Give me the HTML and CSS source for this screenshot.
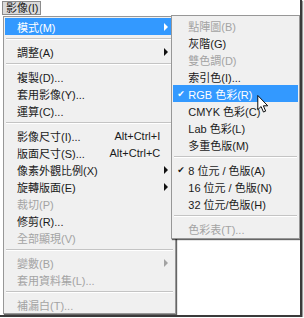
FILE: index.html
```html
<!DOCTYPE html>
<html lang="zh-Hant">
<head>
  <meta charset="UTF-8">
  <title>影像選單</title>
  <link rel="stylesheet" href="styles.css">
</head>
<body>
  <div class="frame">
    <div class="menubar">
      <span class="menu-title">影像(I)</span>
    </div>

    <div class="menus">
      <!-- main image menu -->
      <ul class="menu main">
        <li class="item active has-sub"><span class="label">模式(M)</span><span class="arrow"></span></li>
        <li class="sep"></li>
        <li class="item has-sub"><span class="label">調整(A)</span><span class="arrow"></span></li>
        <li class="sep"></li>
        <li class="item"><span class="label">複製(D)...</span></li>
        <li class="item"><span class="label">套用影像(Y)...</span></li>
        <li class="item"><span class="label">運算(C)...</span></li>
        <li class="sep"></li>
        <li class="item"><span class="label">影像尺寸(I)...</span><span class="key">Alt+Ctrl+I</span></li>
        <li class="item"><span class="label">版面尺寸(S)...</span><span class="key">Alt+Ctrl+C</span></li>
        <li class="item has-sub"><span class="label">像素外觀比例(X)</span><span class="arrow"></span></li>
        <li class="item has-sub"><span class="label">旋轉版面(E)</span><span class="arrow"></span></li>
        <li class="item disabled"><span class="label">裁切(P)</span></li>
        <li class="item"><span class="label">修剪(R)...</span></li>
        <li class="item disabled"><span class="label">全部顯現(V)</span></li>
        <li class="sep"></li>
        <li class="item disabled has-sub"><span class="label">變數(B)</span><span class="arrow"></span></li>
        <li class="item disabled"><span class="label">套用資料集(L)...</span></li>
        <li class="sep"></li>
        <li class="item disabled"><span class="label">補漏白(T)...</span></li>
      </ul>

      <!-- mode submenu -->
      <ul class="menu sub">
        <li class="item disabled"><span class="check"></span><span class="label">點陣圖(B)</span></li>
        <li class="item"><span class="check"></span><span class="label">灰階(G)</span></li>
        <li class="item disabled"><span class="check"></span><span class="label">雙色調(D)</span></li>
        <li class="item"><span class="check"></span><span class="label">索引色(I)...</span></li>
        <li class="item active"><span class="check">✔</span><span class="label">RGB 色彩(R)</span></li>
        <li class="item"><span class="check"></span><span class="label">CMYK 色彩(C)</span></li>
        <li class="item"><span class="check"></span><span class="label">Lab 色彩(L)</span></li>
        <li class="item"><span class="check"></span><span class="label">多重色版(M)</span></li>
        <li class="sep"></li>
        <li class="item"><span class="check">✔</span><span class="label">8 位元 / 色版(A)</span></li>
        <li class="item"><span class="check"></span><span class="label">16 位元 / 色版(N)</span></li>
        <li class="item"><span class="check"></span><span class="label">32 位元/色版(H)</span></li>
        <li class="sep"></li>
        <li class="item disabled"><span class="check"></span><span class="label">色彩表(T)...</span></li>
      </ul>
    </div>

    <svg class="cursor" width="12" height="18" viewBox="0 0 12 19">
      <path d="M0.5 0.5 L0.5 15.5 L4 12.2 L6.5 18 L8.8 17 L6.4 11.4 L11 11.4 Z" fill="#fff" stroke="#000" stroke-width="1" stroke-linejoin="round"/>
    </svg>
  </div>
</body>
</html>
```

FILE: styles.css
```css
body {
  margin: 0;
  background: white;
  font-family: "Liberation Sans", "Noto Sans CJK TC", sans-serif;
  font-size: 11px;
  color: #1a1a1a;
}

.frame {
  position: relative;
  width: 300px;
  height: 315px;
  background: white;
  border-right: 2px solid #3a3a3a;
  border-bottom: 2px solid #3a3a3a;
  box-shadow: 1px 1px 1px #9a9a9a;
  overflow: hidden;
}

.menubar {
  height: 15px;
  padding: 1px 0 0 2px;
  box-sizing: border-box;
  display: flex;
}

.menu-title {
  display: flex;
  align-items: center;
  height: 14px;
  padding: 0 2px 0 3px;
  background: #dadada;
  border: 1px solid #8c8c8c;
  box-sizing: border-box;
  line-height: 1;
}

.menus {
  display: flex;
  align-items: flex-start;
  margin-left: 3px;
}

.menu {
  list-style: none;
  margin: 0;
  background: #f0f0f0;
  border: 1px solid #979797;
  box-shadow: 1px 1px 1px rgba(0, 0, 0, 0.6);
}

.main {
  width: 171px;
  margin-top: 1px;
  padding: 1px 1px 0 1px;
}

.sub {
  position: relative;
  z-index: 1;
  width: 126px;
  margin-left: -5px;
  padding: 1px;
}

.item {
  display: flex;
  align-items: center;
  height: 17px;
  padding-left: 12px;
  white-space: nowrap;
}

.sub .item {
  padding-left: 4px;
}

.item .label {
  flex: 1;
}

.item.active {
  background: #3399ff;
  color: white;
}

.item.disabled {
  color: #a3a3a3;
}

.key {
  margin-right: 14px;
}

.arrow {
  width: 0;
  height: 0;
  margin-right: 6px;
  border-left: 4px solid #111;
  border-top: 4px solid transparent;
  border-bottom: 4px solid transparent;
}

.active .arrow {
  border-left-color: white;
}

.disabled .arrow {
  border-left-color: #a3a3a3;
}

.check {
  width: 11px;
  font-size: 9px;
  font-family: "DejaVu Sans", sans-serif;
}

.sep {
  height: 8px;
  display: flex;
  align-items: center;
}

.sep:before {
  content: "";
  flex: 1;
  margin: 0 1px;
  border-top: 1px solid #c4c4c4;
  border-bottom: 1px solid #ffffff;
}

.cursor {
  position: absolute;
  left: 257px;
  top: 95px;
  z-index: 2;
}
```
